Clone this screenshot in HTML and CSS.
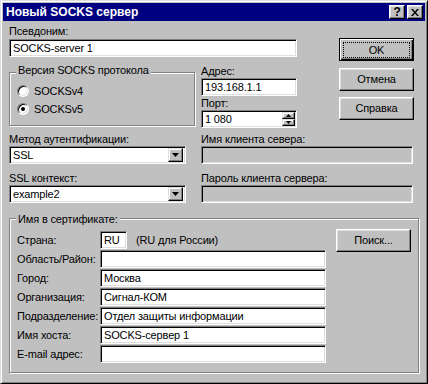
FILE: index.html
```html
<!DOCTYPE html>
<html lang="ru">
<head>
  <meta charset="UTF-8">
  <title>Новый SOCKS сервер</title>
  <link rel="stylesheet" href="styles.css">
</head>
<body>
  <div class="window">
    <div class="titlebar">
      <span class="title">Новый SOCKS сервер</span>
      <div class="title-btns">
        <span class="tbtn help">?</span>
        <span class="tbtn">
          <svg width="8" height="7" viewBox="0 0 8 7"><path d="M0 0h2l2 2.5L6 0h2L5 3.5 8 7H6L4 4.5 2 7H0l3-3.5z" fill="#000"/></svg>
        </span>
      </div>
    </div>

    <div class="content">
      <!-- верхняя часть: псевдоним, версия, адрес, кнопки -->
      <div class="top">
        <div class="top-left">
          <div class="label">Псевдоним:</div>
          <div class="field alias">SOCKS-server 1</div>

          <div class="proto-row">
            <div class="group proto">
              <div class="legend">Версия SOCKS протокола</div>
              <div class="radio-row first"><span class="radio"></span>SOCKSv4</div>
              <div class="radio-row"><span class="radio checked"></span>SOCKSv5</div>
            </div>
            <div class="addr">
              <div class="label">Адрес:</div>
              <div class="field">193.168.1.1</div>
              <div class="label">Порт:</div>
              <div class="field spin">
                <span>1 080</span>
                <span class="spin-btns">
                  <span class="spin-btn"><svg width="5" height="3" viewBox="0 0 5 3"><path d="M2.5 0L5 3H0z" fill="#000"/></svg></span>
                  <span class="spin-btn"><svg width="5" height="3" viewBox="0 0 5 3"><path d="M0 0h5L2.5 3z" fill="#000"/></svg></span>
                </span>
              </div>
            </div>
          </div>
        </div>

        <div class="buttons">
          <div class="btn default"><span class="focus">OK</span></div>
          <div class="btn cancel">Отмена</div>
          <div class="btn help-btn">Справка</div>
        </div>
      </div>

      <!-- метод / контекст / клиент -->
      <div class="mid">
        <div class="mid-left">
          <div class="label">Метод аутентификации:</div>
          <div class="field combo">
            <span>SSL</span>
            <span class="drop"><svg width="7" height="4" viewBox="0 0 7 4"><path d="M0 0h7L3.5 4z" fill="#000"/></svg></span>
          </div>
          <div class="label next">SSL контекст:</div>
          <div class="field combo">
            <span>example2</span>
            <span class="drop"><svg width="7" height="4" viewBox="0 0 7 4"><path d="M0 0h7L3.5 4z" fill="#000"/></svg></span>
          </div>
        </div>
        <div class="mid-right">
          <div class="label">Имя клиента севера:</div>
          <div class="field disabled"></div>
          <div class="label next">Пароль клиента сервера:</div>
          <div class="field disabled"></div>
        </div>
      </div>

      <!-- сертификат -->
      <div class="group cert">
        <div class="legend">Имя в сертификате:</div>
        <div class="cert-body">
          <div class="cert-grid">
            <div class="clabel">Страна:</div>
            <div class="country">
              <div class="field short">RU</div>
              <span class="hint">(RU для России)</span>
            </div>
            <div class="clabel">Область/Район:</div>
            <div class="field"></div>
            <div class="clabel">Город:</div>
            <div class="field">Москва</div>
            <div class="clabel">Организация:</div>
            <div class="field">Сигнал-КОМ</div>
            <div class="clabel">Подразделение:</div>
            <div class="field">Отдел защиты информации</div>
            <div class="clabel">Имя хоста:</div>
            <div class="field">SOCKS-сервер 1</div>
            <div class="clabel">E-mail адрес:</div>
            <div class="field"></div>
          </div>
          <div class="btn search">Поиск...</div>
        </div>
      </div>
    </div>
  </div>
</body>
</html>
```

FILE: styles.css
```css
body {
  margin: 0;
  font-family: "Liberation Sans", Arial, sans-serif;
  font-size: 11px;
  line-height: 13px;
  letter-spacing: -0.15px;
  color: #000;
  background: #c0c0c0;
}
.window {
  width: 428px;
  height: 384px;
  box-sizing: border-box;
  background: #c0c0c0;
  border: 1px solid;
  border-color: #dfdfdf #000 #000 #dfdfdf;
  box-shadow: inset 1px 1px #fff, inset -1px -1px #808080;
  padding: 2px;
}
.titlebar {
  height: 18px;
  background: #000080;
  display: flex;
  align-items: center;
  justify-content: space-between;
  padding: 0 2px 0 3px;
}
.title {
  color: #fff;
  font-weight: bold;
  font-size: 12px;
  letter-spacing: 0;
}
.title-btns {
  display: flex;
  gap: 2px;
}
.tbtn {
  width: 16px;
  height: 14px;
  box-sizing: border-box;
  background: #c0c0c0;
  border: 1px solid;
  border-color: #fff #000 #000 #fff;
  box-shadow: inset -1px -1px #808080, inset 1px 1px #dfdfdf;
  display: flex;
  align-items: center;
  justify-content: center;
}
.tbtn.help {
  font-weight: bold;
  font-size: 12px;
  line-height: 12px;
}
.content {
  padding: 4px 6px 0 6px;
}
.label {
  height: 13px;
  white-space: nowrap;
}
.field {
  height: 18px;
  box-sizing: border-box;
  background: #fff;
  border: 1px solid;
  border-color: #808080 #fff #fff #808080;
  box-shadow: inset 1px 1px #000, inset -1px -1px #dfdfdf;
  padding: 1px 3px 0 3px;
  line-height: 14px;
  white-space: nowrap;
  overflow: hidden;
}
.field.disabled {
  background: #c0c0c0;
}
.top {
  display: flex;
  align-items: flex-start;
}
.top-left {
  width: 288px;
}
.alias {
  margin-top: 1px;
}
.proto-row {
  display: flex;
  gap: 6px;
  margin-top: 7px;
}
.group {
  border: 1px solid #808080;
  box-shadow: inset 1px 1px #fff, 1px 1px #fff;
}
.legend {
  width: fit-content;
  background: #c0c0c0;
  padding: 0 2px;
  margin-left: 6px;
  white-space: nowrap;
}
.proto {
  width: 186px;
  height: 54px;
  box-sizing: border-box;
  margin-top: 8px;
}
.proto .legend {
  margin-top: -9px;
}
.radio-row {
  display: flex;
  align-items: center;
  gap: 5px;
  height: 16px;
  margin: 2px 0 0 7px;
}
.radio-row.first {
  margin-top: 6px;
}
.radio {
  width: 12px;
  height: 12px;
  box-sizing: border-box;
  border-radius: 50%;
  background: #fff;
  border: 1px solid;
  border-color: #808080 #fff #fff #808080;
  box-shadow: inset 1px 1px #000, inset -1px -1px #dfdfdf;
  display: flex;
  align-items: center;
  justify-content: center;
}
.radio.checked::after {
  content: "";
  width: 4px;
  height: 4px;
  border-radius: 50%;
  background: #000;
}
.addr {
  width: 96px;
}
.addr .label {
  margin-top: 1px;
}
.spin {
  display: flex;
  justify-content: space-between;
  padding-right: 1px;
}
.spin-btns {
  display: flex;
  flex-direction: column;
}
.spin-btn {
  width: 13px;
  height: 7px;
  box-sizing: border-box;
  background: #c0c0c0;
  border: 1px solid;
  border-color: #dfdfdf #000 #000 #dfdfdf;
  box-shadow: inset -1px -1px #808080, inset 1px 1px #fff;
  display: flex;
  align-items: center;
  justify-content: center;
}
.buttons {
  width: 75px;
  margin-left: 42px;
  padding-top: 13px;
}
.btn {
  width: 75px;
  height: 23px;
  box-sizing: border-box;
  background: #c0c0c0;
  border: 1px solid;
  border-color: #fff #000 #000 #fff;
  box-shadow: inset -1px -1px #808080, inset 1px 1px #dfdfdf;
  display: flex;
  align-items: center;
  justify-content: center;
}
.btn.default {
  border-color: #000;
  box-shadow: inset 1px 1px #fff, inset -1px -1px #000, inset -2px -2px #808080;
  align-items: stretch;
}
.focus {
  flex: 1;
  margin: 3px 3px 2px 3px;
  border: 1px dotted #000;
  display: flex;
  align-items: center;
  justify-content: center;
}
.cancel {
  margin-top: 7px;
}
.help-btn {
  margin-top: 6px;
}
.mid {
  display: flex;
  gap: 15px;
  margin-top: 5px;
}
.mid-left {
  width: 177px;
}
.mid-right {
  width: 212px;
}
.mid .field {
  margin-top: 1px;
}
.mid .label {
  height: 12px;
}
.mid .label.next {
  margin-top: 8px;
}
.combo {
  display: flex;
  justify-content: space-between;
  padding: 0 2px 0 3px;
  line-height: 16px;
}
.drop {
  width: 15px;
  height: 14px;
  margin-top: 1px;
  box-sizing: border-box;
  background: #c0c0c0;
  border: 1px solid;
  border-color: #dfdfdf #000 #000 #dfdfdf;
  box-shadow: inset -1px -1px #808080, inset 1px 1px #fff;
  display: flex;
  align-items: center;
  justify-content: center;
}
.cert {
  width: 410px;
  height: 155px;
  box-sizing: border-box;
  margin-top: 15px;
}
.cert .legend {
  margin-top: -6px;
}
.cert-body {
  display: flex;
  align-items: flex-start;
  gap: 10px;
  padding: 5px 0 0 7px;
}
.cert-grid {
  display: grid;
  grid-template-columns: 83px 226px;
  grid-auto-rows: 18px;
  row-gap: 1px;
  align-items: center;
}
.clabel {
  white-space: nowrap;
}
.country {
  display: flex;
  align-items: center;
  gap: 9px;
}
.field.short {
  width: 27px;
}
.search {
  margin-top: -2px;
}
```
